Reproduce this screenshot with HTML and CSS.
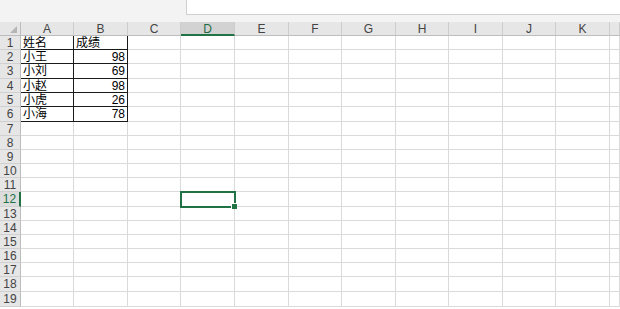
FILE: index.html
```html
<!DOCTYPE html>
<html lang="zh-CN">
<head>
    <meta charset="UTF-8">
    <meta name="viewport" content="width=device-width, initial-scale=1.0">
    <title>工作表</title>
    <link rel="stylesheet" href="styles.css">
</head>
<body>
    <div class="topbar">
        <div class="formula-box"></div>
    </div>
    <div class="sheet" id="sheet"></div>
    <script src="script.js"></script>
</body>
</html>
```

FILE: styles.css
```css
body {
    margin: 0;
    overflow: hidden;
    background: #fff;
    font-family: "Liberation Sans", "Noto Sans CJK SC", sans-serif;
    font-size: 12px;
    color: #000;
}

.topbar {
    height: 22px;
    background: #f3f3f3;
    display: flex;
}

.formula-box {
    margin-left: 186px;
    flex: 1;
    height: 14px;
    background: #fff;
    border-left: 1px solid #d0d0d0;
    border-bottom: 1px solid #d0d0d0;
}

.sheet {
    display: grid;
    grid-template-columns: 21px 53px 54px 53px 54px 54px 53px 54px 53px 54px 53px 54px 1fr;
    grid-template-rows: 14px 14px 14px 15px 14px 14px 15px 14px 14px 14px 14px 14px 15px 14px 14px 14px 14px 14px 15px 15px;
}

.cell {
    box-sizing: border-box;
    border-right: 1px solid #dadada;
    border-bottom: 1px solid #dadada;
    padding: 1px 2px 0;
    line-height: 13px;
    white-space: nowrap;
    overflow: hidden;
}

.corner {
    position: relative;
    background: #e6e6e6;
    border-right: 1px solid #bdbdbd;
    border-bottom: 1px solid #bdbdbd;
}

.corner::after {
    content: "";
    position: absolute;
    right: 3px;
    bottom: 2px;
    border-left: 7px solid transparent;
    border-bottom: 7px solid #b5b5b5;
}

.col-head {
    background: #e6e6e6;
    border-right: 1px solid #cdcdcd;
    border-bottom: 1px solid #bdbdbd;
    text-align: center;
    color: #444;
}

.row-head {
    background: #e6e6e6;
    border-right: 1px solid #bdbdbd;
    border-bottom: 1px solid #d0d0d0;
    text-align: center;
    color: #444;
    padding: 1px 0 0;
}

.col-head.selected {
    background: #d2d2d2;
    border-bottom: 2px solid #217346;
    color: #1e6b41;
}

.row-head.selected {
    background: #dcdcdc;
    border-right: 2px solid #217346;
    color: #217346;
}

.boxed {
    border-right-color: #1a1a1a;
    border-bottom-color: #1a1a1a;
}

.num {
    text-align: right;
}

.active {
    position: relative;
    overflow: visible;
}

.active::before {
    content: "";
    position: absolute;
    top: -1px;
    left: -1px;
    right: -2px;
    bottom: -2px;
    border: 2px solid #217346;
}

.active::after {
    content: "";
    position: absolute;
    right: -3px;
    bottom: -3px;
    width: 5px;
    height: 5px;
    background: #217346;
    border-left: 1px solid #fff;
    border-top: 1px solid #fff;
}
```

FILE: script.js
```js
// 列名和数据，L 列只露出一点边，不写字母
const cols = ['A', 'B', 'C', 'D', 'E', 'F', 'G', 'H', 'I', 'J', 'K', ''];
const data = {
    1: ['姓名', '成绩'],
    2: ['小王', 98],
    3: ['小刘', 69],
    4: ['小赵', 98],
    5: ['小虎', 26],
    6: ['小海', 78]
};
const activeCol = 3;
const activeRow = 12;

const sheet = document.getElementById('sheet');

function addCell(cls, text) {
    const div = document.createElement('div');
    div.className = cls;
    if (text !== undefined) div.textContent = text;
    sheet.appendChild(div);
}

addCell('corner');
cols.forEach((c, i) => {
    addCell('cell col-head' + (i === activeCol ? ' selected' : ''), c);
});

for (let r = 1; r <= 19; r++) {
    addCell('cell row-head' + (r === activeRow ? ' selected' : ''), r);
    cols.forEach((c, i) => {
        let cls = 'cell';
        let text;
        if (data[r] && i < 2) {
            cls += ' boxed';
            text = data[r][i];
            if (typeof text === 'number') cls += ' num';
        }
        if (r === activeRow && i === activeCol) cls += ' active';
        addCell(cls, text);
    });
}
```
